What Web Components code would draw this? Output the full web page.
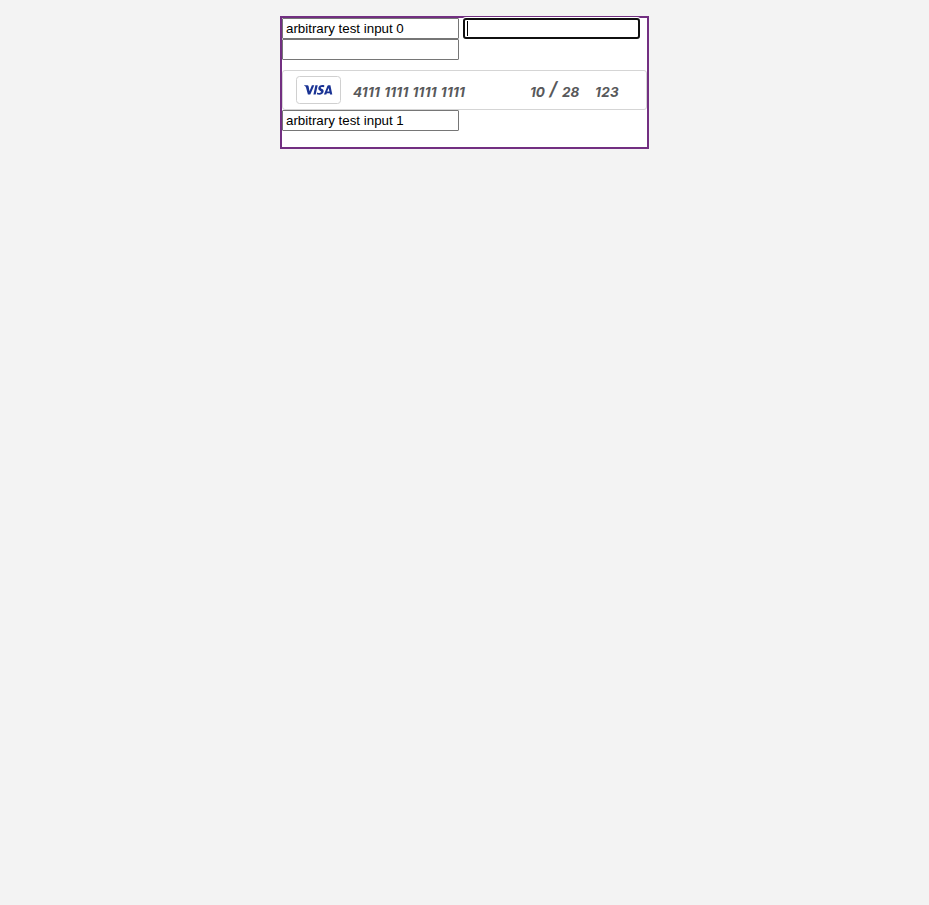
<!DOCTYPE html>
<html lang="en"><head><meta charset="utf-8"><title>Card form</title>
<style>html,body{margin:0;background:#f3f3f3}body{padding-top:16px}</style></head>
<body>
<card-form>
  <text-box>arbitrary test input 0</text-box>
  <text-box focused></text-box>
  <text-box></text-box>
  <card-entry slot="card"></card-entry>
  <text-box slot="after">arbitrary test input 1</text-box>
</card-form>
<script>
class CardForm extends HTMLElement {
  constructor() {
    super();
    this.attachShadow({mode: 'open'}).innerHTML = `<style>
      :host{display:block;box-sizing:border-box;width:369px;height:133px;margin:0 auto;border:2px solid #722f81;background:#fff}
      .top{display:flex;flex-wrap:wrap;column-gap:4px;margin-bottom:10px}
    </style><div class="top"><slot></slot></div><slot name="card"></slot><slot name="after"></slot>`;
  }
}
class TextBox extends HTMLElement {
  constructor() {
    super();
    this.attachShadow({mode: 'open'}).innerHTML = `<style>
      :host{display:block;box-sizing:border-box;width:177px;height:21px;padding:2px 3px;border:1px solid #767676;border-radius:1px;background:#fff;color:#000;font:13.333px/15px "Liberation Sans",Arial,sans-serif;white-space:pre}
      :host([focused]){border:2px solid #101010;border-radius:3px;padding:1px 2px;box-shadow:0 0 0 1px #fff}
      .caret{display:none;width:1px;height:15px;background:#000}
      :host([focused]) .caret{display:block}
    </style><slot></slot><div class="caret"></div>`;
  }
}
class CardEntry extends HTMLElement {
  constructor() {
    super();
    this.attachShadow({mode: 'open'}).innerHTML = `<style>
      :host{display:flex;align-items:center;box-sizing:border-box;width:365px;height:40px;border:1px solid #d5d5d5;border-radius:3px;background:#fff;padding-left:13px;color:#58595b;font:italic 700 13.5px/20px Inter,"Open Sans",sans-serif;white-space:pre}
      span{display:block;padding-top:4px}
      .number{width:177px;margin-left:12px;letter-spacing:.25px;word-spacing:.6px}
      .exp{display:flex;width:65px}
      .exp span:first-child{width:18px}
      .cvv{letter-spacing:.35px}
      .exp .slash{width:14px;font:italic 900 20px/20px Lato,sans-serif;padding:0;text-indent:1px}
    </style><visa-badge></visa-badge><span class="number">4111 1111 1111 1111</span><div class="exp"><span>10</span><span class="slash">/</span><span>28</span></div><span class="cvv">123</span>`;
  }
}
class VisaBadge extends HTMLElement {
  constructor() {
    super();
    this.attachShadow({mode: 'open'}).innerHTML = `<style>
      :host{display:block;width:45px;height:28px}svg{display:block}
    </style><svg width="45" height="28" viewBox="0 0 45 28">
      <rect x=".5" y=".5" width="44" height="27" rx="3" fill="#fff" stroke="#d0d0d0"/>
      <g fill="#1a3394"><path d="M8 9.3h3.3q1.1 0 1.3 1l.9 4.9 2.4-5.9h2.4l-4 9.3h-2.4L10 11.5Q9.6 10 8 9.6z"/><path d="M19.4 9.3h2.3l-2 9.3h-2.3z"/><path d="M28.4 9.5l-.4 1.8c-1.3-.6-3.3-.5-3.3.4 0 1 3 1.1 3 3.4 0 3.4-4 4.2-6.9 3.2l.4-1.9c1.5.8 4 .7 4-.4 0-1.1-2.9-1.2-2.9-3.4 0-3.3 3.9-4.1 6.1-3.1z"/><path fill-rule="evenodd" d="M32.3 9.3h2.1l1.9 9.3h-2.2l-.3-1.3h-3l-.5 1.3h-2.4l3.5-8.5q.3-.8.9-.8zm.4 2.6-1.5 3.6h2.2z"/></g>
    </svg>`;
  }
}
customElements.define('card-form', CardForm);
customElements.define('text-box', TextBox);
customElements.define('visa-badge', VisaBadge);
customElements.define('card-entry', CardEntry);
</script></body></html>
